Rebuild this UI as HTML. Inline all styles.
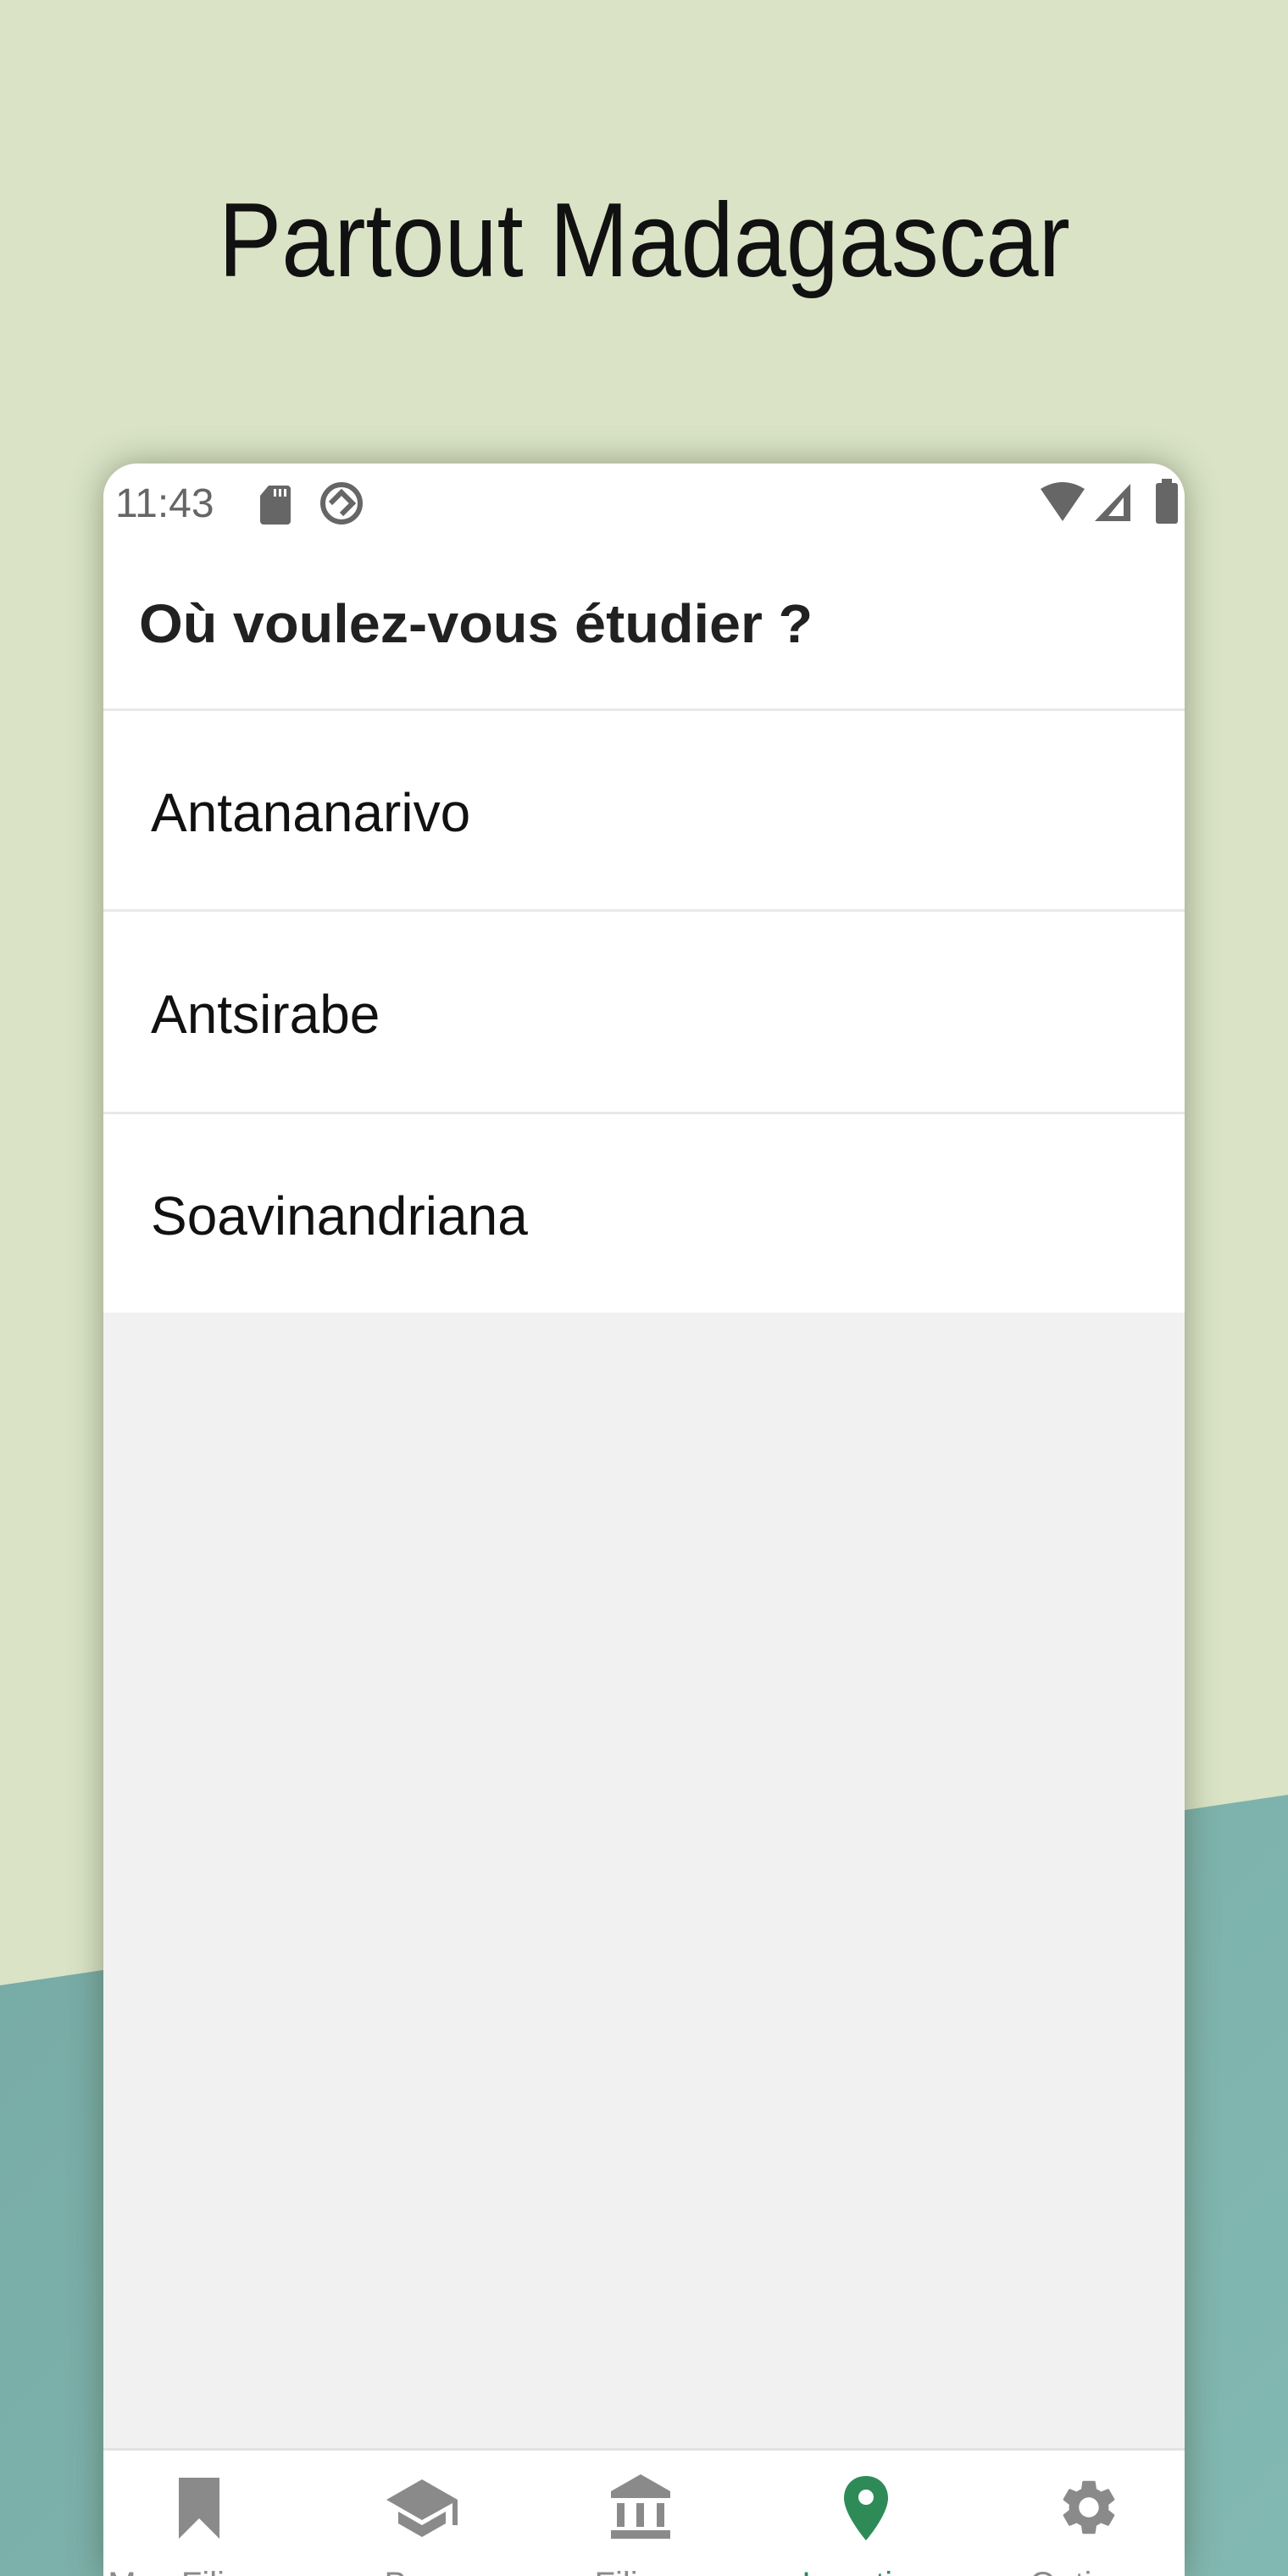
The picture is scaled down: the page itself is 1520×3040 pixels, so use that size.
<!DOCTYPE html>
<html><head><meta charset="utf-8"><style>
html,body{margin:0;padding:0;overflow:hidden}
body{width:1520px;height:3040px;position:relative;overflow:hidden;background:#dae3c6;font-family:"Liberation Sans",sans-serif}
.teal{position:absolute;left:0;top:0;width:1520px;height:3040px;background:linear-gradient(135deg,#6e9f9a,#82b8b2);clip-path:polygon(0 2343px,1520px 2118px,1520px 3040px,0 3040px)}
.title{position:absolute;top:204px;left:0;width:1520px;text-align:center;font-size:124px;color:#111;line-height:160px}
.title span{display:inline-block;transform:scaleX(0.9)}
.card{position:absolute;left:122px;top:547px;width:1276px;height:2493px;background:#f1f1f1;border-radius:40px 40px 0 0;overflow:hidden;box-shadow:0 0 40px rgba(60,70,40,0.45)}
.top{position:absolute;left:0;top:0;width:100%;height:1002px;background:#fff}
.time{position:absolute;left:14px;top:20px;font-size:48px;color:#666}
.hdr{position:absolute;left:42px;top:152px;font-size:64px;font-weight:bold;color:#212121;transform:scaleX(1.04);transform-origin:left}
.div{position:absolute;left:0;width:100%;height:3px;background:#e8e8e8}
.item{position:absolute;left:56px;font-size:64px;color:#111}
.nav{position:absolute;left:0;top:2342px;width:100%;height:260px;background:#fff;border-top:3px solid #e2e2e2}
.lbl{position:absolute;top:136px;width:260px;margin-left:-130px;text-align:center;font-size:40px;color:#8a8a8a}
</style></head><body>
<div class="teal"></div>
<div class="title"><span>Partout Madagascar</span></div>
<div class="card">
 <div class="top">
  <div class="time">11:43</div>
  <svg style="position:absolute;left:183px;top:24px" width="40" height="48" viewBox="0 0 40 48"><path d="M12 2h22a4 4 0 0 1 4 4v38a4 4 0 0 1-4 4H6a4 4 0 0 1-4-4V14z" fill="#666"/><rect x="18" y="6" width="3" height="9" fill="#fff"/><rect x="24" y="6" width="3" height="9" fill="#fff"/><rect x="30" y="6" width="3" height="9" fill="#fff"/></svg>
  <svg style="position:absolute;left:254px;top:20px" width="54" height="54" viewBox="0 0 54 54"><circle cx="27" cy="27" r="22" fill="none" stroke="#666" stroke-width="6"/><path d="M14 27l13-13 13 13-13 13" fill="none" stroke="#666" stroke-width="6"/></svg>
  <svg style="position:absolute;left:1104px;top:22px" width="56" height="48" viewBox="0 0 56 48"><path d="M2 8Q28-8 54 8L28 46z" fill="#666"/></svg>
  <svg style="position:absolute;left:1168px;top:22px" width="46" height="48" viewBox="0 0 46 48"><path d="M44 2V46H2z" fill="#666"/><path d="M36 18V40H18z" fill="#fff"/></svg>
  <svg style="position:absolute;left:1240px;top:18px" width="30" height="54" viewBox="0 0 30 54"><rect x="9" y="0" width="12" height="6" fill="#666"/><rect x="2" y="5" width="26" height="48" rx="3" fill="#666"/></svg>
  <div class="hdr">Où voulez-vous étudier ?</div>
  <div class="div" style="top:289px"></div>
  <div class="item" style="top:375px">Antananarivo</div>
  <div class="div" style="top:526px"></div>
  <div class="item" style="top:613px">Antsirabe</div>
  <div class="div" style="top:765px"></div>
  <div class="item" style="top:851px">Soavinandriana</div>
 </div>
 <div class="nav">
  <svg style="position:absolute;left:85px;top:30px" width="56" height="74" viewBox="0 0 56 74"><path d="M4 2h48v72L28 50 4 74z" fill="#8a8a8a"/></svg>
  <svg style="position:absolute;left:332px;top:30px" width="88" height="74" viewBox="0 0 88 74"><path d="M44 4L2 28l42 24 36-20v26h6V28z" fill="#8a8a8a"/><path d="M16 42v14l28 16 28-16V42L44 58z" fill="#8a8a8a"/></svg>
  <svg style="position:absolute;left:597px;top:26px" width="74" height="80" viewBox="0 0 74 80"><path d="M37 2L2 22v8h70v-8z" fill="#8a8a8a"/><rect x="9" y="36" width="9" height="28" fill="#8a8a8a"/><rect x="32" y="36" width="9" height="28" fill="#8a8a8a"/><rect x="56" y="36" width="9" height="28" fill="#8a8a8a"/><rect x="2" y="68" width="70" height="10" fill="#8a8a8a"/></svg>
  <svg style="position:absolute;left:872px;top:28px" width="56" height="80" viewBox="0 0 56 80"><path d="M28 2C13 2 2 13 2 28c0 20 26 50 26 50s26-30 26-50C54 13 43 2 28 2z" fill="#2e8b57"/><circle cx="28" cy="27" r="9" fill="#fff"/></svg>
  <svg style="position:absolute;left:1124px;top:28px" width="78" height="78" viewBox="0 0 24 24"><path fill="#8a8a8a" d="M19.14 12.94c.04-.3.06-.61.06-.94 0-.32-.02-.64-.07-.94l2.03-1.58a.49.49 0 0 0 .12-.61l-1.92-3.32a.488.488 0 0 0-.59-.22l-2.39.96c-.5-.38-1.03-.7-1.62-.94l-.36-2.54a.484.484 0 0 0-.48-.41h-3.84c-.24 0-.43.17-.47.41l-.36 2.54c-.59.24-1.13.57-1.62.94l-2.39-.96c-.22-.08-.47 0-.59.22L2.74 8.87c-.12.21-.08.47.12.61l2.03 1.58c-.05.3-.09.63-.09.94s.02.64.07.94l-2.03 1.58a.49.49 0 0 0-.12.61l1.92 3.32c.12.22.37.29.59.22l2.39-.96c.5.38 1.03.7 1.62.94l.36 2.54c.05.24.24.41.48.41h3.84c.24 0 .44-.17.47-.41l.36-2.54c.59-.24 1.13-.56 1.62-.94l2.39.96c.22.08.47 0 .59-.22l1.92-3.32c.12-.22.07-.47-.12-.61l-2.01-1.58zM12 15.6c-1.98 0-3.6-1.62-3.6-3.6s1.62-3.6 3.6-3.6 3.6 1.62 3.6 3.6-1.62 3.6-3.6 3.6z"/></svg>
  <div class="lbl" style="left:113px">Mes Filieres</div>
  <div class="lbl" style="left:376px">Bacc</div>
  <div class="lbl" style="left:634px">Filiere</div>
  <div class="lbl" style="left:900px;color:#2e8b57">Location</div>
  <div class="lbl" style="left:1162px">Options</div>
 </div>
</div>
</body></html>
